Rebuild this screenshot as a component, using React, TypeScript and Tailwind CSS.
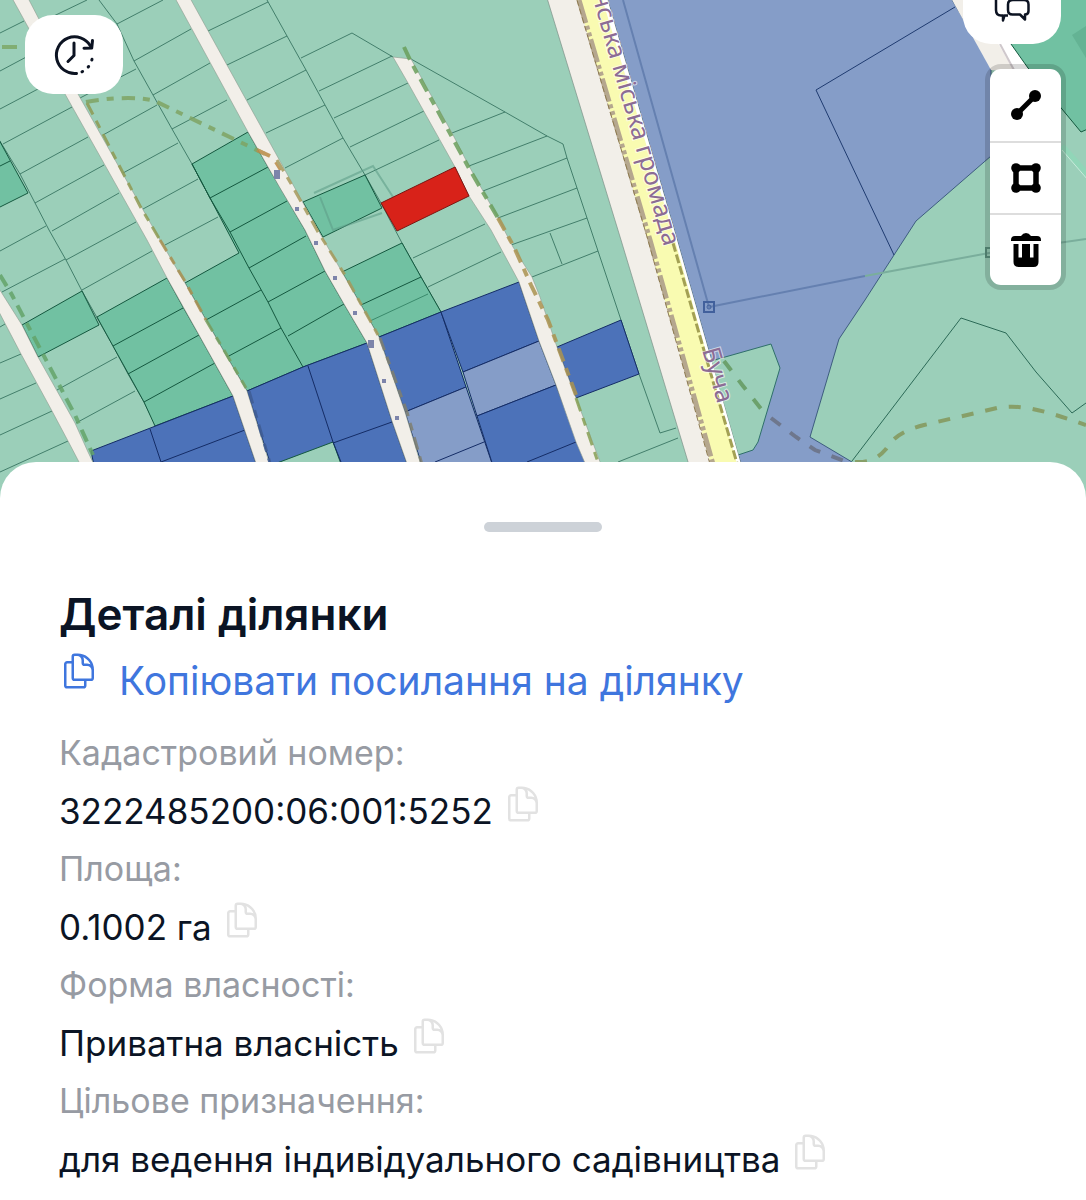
import React from "react";
import { HiOutlineDocumentDuplicate } from "react-icons/hi2";

const lightGreen = "#9bcfb9";
const green = "#71c1a2";
const blue = "#4c72b9";
const lightBlue = "#859dc8";

const parcels: { fill: string; points: string }[] = [
  { fill: green, points: "-2,138 28,193 -2,208" },
  { fill: green, points: "22,325 82,291 99,325 38,357" },
  { fill: green, points: "97,317 167,278 183,307 199,335 233,396 155,426 144,402 113,346" },
  {
    fill: green,
    points:
      "185,283 239,253 210,198 192,164 248,132 268,167 305,230 325,271 344,304 367,343 303,367 247,391 227,357",
  },
  { fill: green, points: "303,202 365,175 382,208 323,237" },
  { fill: green, points: "342,272 402,243 421,277 441,312 379,337 361,305" },
  { fill: blue, points: "91,451 233,396 260,475 96,475" },
  { fill: blue, points: "247,391 303,367 367,343 392,421 411,475 274,475" },
  { fill: lightGreen, points: "245,475 333,442 345,475" },
  { fill: blue, points: "379,337 441,312 466,387 405,412" },
  { fill: blue, points: "441,312 519,282 539,341 463,372" },
  { fill: lightBlue, points: "463,372 539,341 556,385 477,416" },
  { fill: lightBlue, points: "405,412 466,387 496,475 425,475" },
  { fill: blue, points: "477,416 556,385 590,475 496,475" },
  { fill: blue, points: "557,347 621,320 639,374 576,398" },
];

const plotLines =
  "M0 33L24 21M0 71L45 47M0 109L57 79M0 166L10 161M35 25L87 0" +
  "M-2 138L20 174L49 230L66 260L82 291L113 346L128 374L144 402L156 426" +
  "M3 144L72 107M20 174L88 137M35 203L104 165M52 231L119 193M66 260L136 222M82 290L152 251" +
  "M0 251L46 226M2 292L65 259M57 390L117 357M76 423L135 391" +
  "M0 327L5 324M0 363L21 354M0 399L36 383M0 435L52 411M0 472L68 441" +
  "M99 0L117 24L134 61L153 95L172 129L192 164L210 198L230 232L249 268L268 302L281 328L303 367" +
  "M117 24L163 0M134 61L191 29M153 95L210 63M172 129L227 100" +
  "M80 98L136 69M103 135L157 105M123 173L178 143M143 209L198 179M165 245L218 217" +
  "M267 0L287 36L306 70L325 105L343 138L365 175L381 203L402 243L421 277L441 312" +
  "M208 31L268 2M227 65L287 36M247 100L306 70M266 133L325 105M285 168L343 138" +
  "M301 58L352 33L393 57M319 91L392 56M334 118L408 83M350 147L424 111M365 175L439 140" +
  "M413 258L485 224M428 287L501 252" +
  "M411 59L505 112L547 136L563 144L567 158L577 188L587 218L598 251L621 320L639 374L660 433L676 428" +
  "M452 133L505 112M469 166L547 136M483 191L567 158M498 218L577 188M511 245L587 218M532 277L598 251" +
  "M550 233L562 264M618 462L678 438";

const greenLines =
  "M0 166L10 161M113 346L183 308M128 374L199 335M144 402L215 363M206 320L261 290M227 357L281 328" +
  "M192 164L210 198L230 232L249 268L268 302L281 328L303 367" +
  "M210 198L268 167M230 232L287 201M249 268L306 236M268 302L325 271M288 336L344 304M361 305L421 277";

const blueLines =
  "M150 429L161 462L245 430M308 366L333 442L341 462M333 443L392 422M435 462L484 442M527 462L576 442";

const powerBoxes = [
  [274, 170, 6, 9],
  [295, 207, 4, 4],
  [314, 241, 4, 4],
  [333, 276, 4, 4],
  [353, 311, 4, 4],
  [368, 340, 6, 8],
  [382, 379, 4, 4],
  [395, 416, 4, 4],
];

function CadastralMap() {
  return (
    <svg
      className="block h-[510px] w-full"
      viewBox="0 0 1086 510"
      preserveAspectRatio="xMidYMin slice"
      role="img"
      aria-label="Кадастрова карта"
    >
      <rect width="1086" height="510" fill={lightGreen} />

      <path d={plotLines} fill="none" stroke="#2c6a57" strokeWidth="0.8" />
      {parcels.map((p) => (
        <polygon
          key={p.points}
          points={p.points}
          fill={p.fill}
          stroke={p.fill === green || p.fill === lightGreen ? "#14583f" : "#142c66"}
          strokeWidth="1"
        />
      ))}
      <path d={greenLines} fill="none" stroke="#14583f" strokeWidth="1" />
      <path d="M370 321L428 294" stroke="#3a8a6c" strokeWidth="1" />
      <path d={blueLines} fill="none" stroke="#142c66" strokeWidth="1" />
      <path
        d="M314 193L373 166L393 197M320 197L333 230L382 213"
        fill="none"
        stroke="#5f9f88"
        strokeWidth="2"
        opacity="0.6"
      />

      <g fill="#f2efe9" stroke="#8d9a8f" strokeWidth="0.6">
        <path d="M-2 287L22 325L38 357L75 423L88 452L99 475H86L79 462L68 441L52 411L21 354L-2 310Z" />
        <path d="M12 -2L65 94L147 240L167 278L199 335L233 396L260 475H273L247 391L227 357L206 320L185 283L160 240L78 94L28 -2Z" />
        <path d="M175 -2L248 132L280 188L305 230L325 271L344 304L367 343L392 421L411 475H424L405 412L379 337L361 305L342 272L318 230L270 143L190 -2Z" />
        <path d="M393 57L408 83L455 167L469 196L491 230L519 282L539 341L556 385L576 442L590 475H605L576 398L557 347L540 297L532 277L513 247L498 218L483 191L469 166L452 133L411 59Z" />
      </g>

      <polygon
        points="381,203 455,167 469,196 397,231"
        fill="#d82219"
        stroke="#7c1712"
        strokeWidth="1"
      />

      <polygon
        points="607,-2 951,-2 991,66 991,156 916,221 894,255 865,300 839,339 810,437 852,462 870,475 744,475 677,240"
        fill={lightBlue}
        stroke="#28466d"
        strokeWidth="0.8"
      />
      <polygon
        points="711,361 771,344 780,368 758,442 753,450 738,455"
        fill={lightGreen}
        stroke="#2f6f6a"
        strokeWidth="1"
      />
      <path d="M955 7L816 90L894 255" fill="none" stroke="#1f3b70" strokeWidth="1" />
      <path
        d="M852 461L961 318L1006 333L1036 372L1072 413L1086 403"
        fill="none"
        stroke="#2c6a57"
        strokeWidth="1"
      />

      <polygon points="951,-2 991,70 1031,74 985,-2" fill="#f2efe9" />
      <path d="M996 40L1016 74H1036L1010 40Z" fill="#ffffff" />
      <path d="M1000 44L1014 70" stroke="#cfc8cc" strokeWidth="2" />
      <polygon
        points="980,-2 1011,44 1028,68 1081,132 1090,128 1090,-2"
        fill={green}
        stroke="#14583f"
        strokeWidth="1"
      />
      <path d="M1086 26L1072 35L1086 58Z" fill="#64b394" />
      <path d="M1062 146L1090 178" stroke="#8bdbb8" strokeWidth="6" opacity="0.6" />
      <path d="M1062 150L1088 180" stroke="#c9eadb" strokeWidth="1" />

      <g fill="none" strokeWidth="2">
        <path d="M623 0L709 307L865 276" stroke="#6580b0" />
        <path d="M865 276L989 253L1086 239" stroke="#7aae9c" />
      </g>
      <rect x="704" y="302" width="10" height="10" fill="none" stroke="#41609c" strokeWidth="2" />
      <circle cx="709" cy="307" r="2" fill="none" stroke="#41609c" />
      <rect x="986" y="248" width="9" height="9" fill="none" stroke="#5c927f" strokeWidth="2" />

      <polygon
        points="547,-2 621,240 692,475 744,475 677,240 607,-2"
        fill="#f2efe9"
        stroke="#7d8f86"
        strokeWidth="0.7"
      />
      <polygon points="600,-2 672,230 740,475 744,475 677,240 607,-2" fill="#ffffff" />
      <polygon points="577,-2 648,240 714,475 740,475 672,230 602,-2" fill="#f9fbb1" />
      <path
        d="M579 0L650 240L716 475"
        fill="none"
        stroke="#b5a78e"
        strokeWidth="5"
        strokeDasharray="24 3 4 3 4 3"
      />
      <path d="M577 0L648 240L713 475" fill="none" stroke="#8d7a50" strokeWidth="1" strokeDasharray="6 3" />
      <path
        d="M673 243L703 347L739 470"
        fill="none"
        stroke="#a3a054"
        strokeWidth="3"
        strokeDasharray="9 3"
      />

      <g fill="none" strokeWidth="4" opacity="0.85">
        <path d="M2 47H17" stroke="#7da967" />
        <path
          d="M86 102C105 98 140 96 155 101L265 154"
          stroke="#7fa464"
          strokeDasharray="13 8 7 8"
        />
        <path d="M257 150L270 156M276 162L281 170" stroke="#b98b45" />
        <path d="M0 275L12 295L25 320L75 415L93 455" stroke="#64a46a" strokeDasharray="13 7 8 7" />
        <path d="M87 103L140 206L160 240" stroke="#8f9b54" strokeWidth="3" strokeDasharray="13 7 8 7" />
        <path d="M160 240L186 283L206 320" stroke="#a98f50" strokeWidth="3" strokeDasharray="13 7 8 7" />
        <path d="M206 320L228 357L246 388" stroke="#779f60" strokeWidth="3" strokeDasharray="13 7 8 7" />
        <path d="M249 391L272 470" stroke="#3f5c93" strokeWidth="3" strokeDasharray="13 7 8 7" />
        <path d="M277 160L290 182L318 232L345 275L378 335" stroke="#a59a5c" strokeWidth="3" strokeDasharray="13 7 8 7" />
        <path d="M380 338L407 412L423 468" stroke="#7f7f70" strokeWidth="3" strokeDasharray="13 7 8 7" />
        <path d="M404 47L411 62L470 170L498 218" stroke="#6a9f5c" strokeDasharray="14 7 8 7" />
        <path d="M498 218L514 247L531 285L548 320L576 395" stroke="#ab9350" strokeDasharray="14 7 8 7" />
        <path d="M576 398L600 468" stroke="#86a055" strokeWidth="3" strokeDasharray="14 7 8 7" />
        <path d="M724 361L743 386L762 410" stroke="#64995f" strokeDasharray="12 12" />
        <path d="M771 418L796 437L815 450L850 463" stroke="#6b7183" strokeDasharray="12 12" />
        <path
          d="M855 462C872 463 880 456 886 449C894 437 902 431 924 425L997 408C1020 404 1040 409 1086 425"
          stroke="#84975a"
          strokeDasharray="12 12"
        />
      </g>
      <g fill="#7d84aa">
        {powerBoxes.map(([x, y, w, h]) => (
          <rect key={y} x={x} y={y} width={w} height={h} />
        ))}
      </g>

      <g
        fill="#8c6c95"
        stroke="#ffffff"
        strokeOpacity="0.6"
        strokeWidth="2"
        paintOrder="stroke"
        fontFamily="'Noto Sans', sans-serif"
        fontSize="25"
      >
        <text transform="translate(664 247) rotate(74)" textAnchor="end">
          нська міська громада
        </text>
        <text transform="translate(702 350) rotate(74)">Буча</text>
      </g>
    </svg>
  );
}

function HistoryIcon() {
  return (
    <svg width="44" height="44" viewBox="0 0 44 44" fill="none" stroke="#0c1322" strokeWidth="3" strokeLinecap="round" strokeLinejoin="round" aria-hidden="true">
      <path d="M24.500 40.400A18.300 18.300 0 1 1 38.500 13" />
      <path d="M40.500 7.500L39.700 15L32 15.300" />
      <path d="M22 10V22.500L16 28.500" />
      <path d="M30 38.800L30.600 38.500M36.200 34L36.600 33.500M39.800 27L40 26.300" />
    </svg>
  );
}

function ChatIcon() {
  return (
    <svg width="38" height="38" viewBox="0 0 38 38" fill="none" stroke="#0c1322" strokeWidth="2.500" strokeLinejoin="round" aria-hidden="true">
      <path d="M15 29.500H11.500L10 34.500V29.500H8Q3 29.500 3 24V9Q3 4 8 4H24Q29 4 29 9V14" />
      <path d="M20 14H31Q35.500 14 35.500 18.500V25Q35.500 28.500 32 28.500V33.500L27 28.500H19.500Q15 28.500 15 24V18.500Q15 14 20 14Z" />
    </svg>
  );
}

function LineIcon() {
  return (
    <svg width="30" height="30" viewBox="0 0 30 30" aria-hidden="true">
      <path d="M6 24L24 6" stroke="#000" strokeWidth="5" />
      <circle cx="6" cy="24" r="6" />
      <circle cx="24" cy="6" r="6" />
    </svg>
  );
}

function PolygonIcon() {
  return (
    <svg width="30" height="30" viewBox="0 0 30 30" aria-hidden="true">
      <rect x="5" y="5" width="20" height="20" rx="1" fill="none" stroke="#000" strokeWidth="5.500" />
      <circle cx="5" cy="5" r="4.800" />
      <circle cx="25" cy="5" r="4.800" />
      <circle cx="5" cy="25" r="4.800" />
      <circle cx="25" cy="25" r="4.800" />
    </svg>
  );
}

function TrashIcon() {
  return (
    <svg width="30" height="34" viewBox="0 0 30 34" aria-hidden="true">
      <path d="M0 8V7Q0 3 4 3H10Q12 0 15 0T20 3H26Q30 3 30 7V8Z" />
      <path d="M2.500 11H7.500V24.500H11V11H19V24.500H22.500V11H27.500V29Q27.500 34 22.500 34H7.500Q2.500 34 2.500 29Z" />
    </svg>
  );
}

const tools = [
  { label: "Виміряти відстань", icon: <LineIcon /> },
  { label: "Виміряти площу", icon: <PolygonIcon /> },
  { label: "Видалити", icon: <TrashIcon /> },
];

const details = [
  { label: "Кадастровий номер:", value: "3222485200:06:001:5252" },
  { label: "Площа:", value: "0.1002 га" },
  { label: "Форма власності:", value: "Приватна власність" },
  { label: "Цільове призначення:", value: "для ведення індивідуального садівництва" },
];

export default function App() {
  return (
    <main className="relative min-h-screen overflow-hidden bg-white font-['Inter',sans-serif] text-[#0b1424]">
      <CadastralMap />

      <button
        type="button"
        aria-label="Історія"
        className="absolute left-[25px] top-[15px] flex h-[79px] w-[98px] items-center justify-center rounded-[28px] bg-white"
      >
        <HistoryIcon />
      </button>

      <div className="absolute -top-[35px] right-[25px] flex flex-col items-center gap-5">
        <button
          type="button"
          aria-label="Чат"
          className="flex h-[79px] w-[98px] items-center justify-center rounded-[28px] bg-white"
        >
          <ChatIcon />
        </button>
        <div className="-mr-[5px] flex flex-col self-end divide-y-2 divide-[#dddddd] overflow-hidden rounded-2xl border-[5px] border-black/15 bg-white bg-clip-padding">
          {tools.map((t) => (
            <button
              key={t.label}
              type="button"
              aria-label={t.label}
              className="box-content flex h-[70px] w-[71px] items-center justify-center first:h-[72px]"
            >
              {t.icon}
            </button>
          ))}
        </div>
      </div>

      <section className="relative -mt-12 rounded-t-[36px] bg-white px-[59px] pb-4 pt-[60px]">
        <div className="mx-auto h-[10px] w-[118px] rounded-full bg-[#cdd2d8]" />

        <h1 className="mt-[54px] text-[44px] font-semibold leading-[56px]">Деталі ділянки</h1>
        <button
          type="button"
          className="mt-[9px] flex items-start gap-5 text-left text-[39px] leading-[60px] text-[#3f76de]"
        >
          <HiOutlineDocumentDuplicate className="size-10 shrink-0" />
          <span>Копіювати посилання на ділянку</span>
        </button>

        <dl className="mt-[13px] leading-[58px]">
          {details.map((d) => (
            <React.Fragment key={d.label}>
              <dt className="text-[34px] text-[#979ba3]">{d.label}</dt>
              <dd className="flex items-start gap-[10px] text-[35px]">
                <span>{d.value}</span>
                <button type="button" aria-label={`Копіювати: ${d.value}`} className="mt-0.5 text-[#e2e2e2]">
                  <HiOutlineDocumentDuplicate className="size-10" />
                </button>
              </dd>
            </React.Fragment>
          ))}
        </dl>
      </section>
    </main>
  );
}
